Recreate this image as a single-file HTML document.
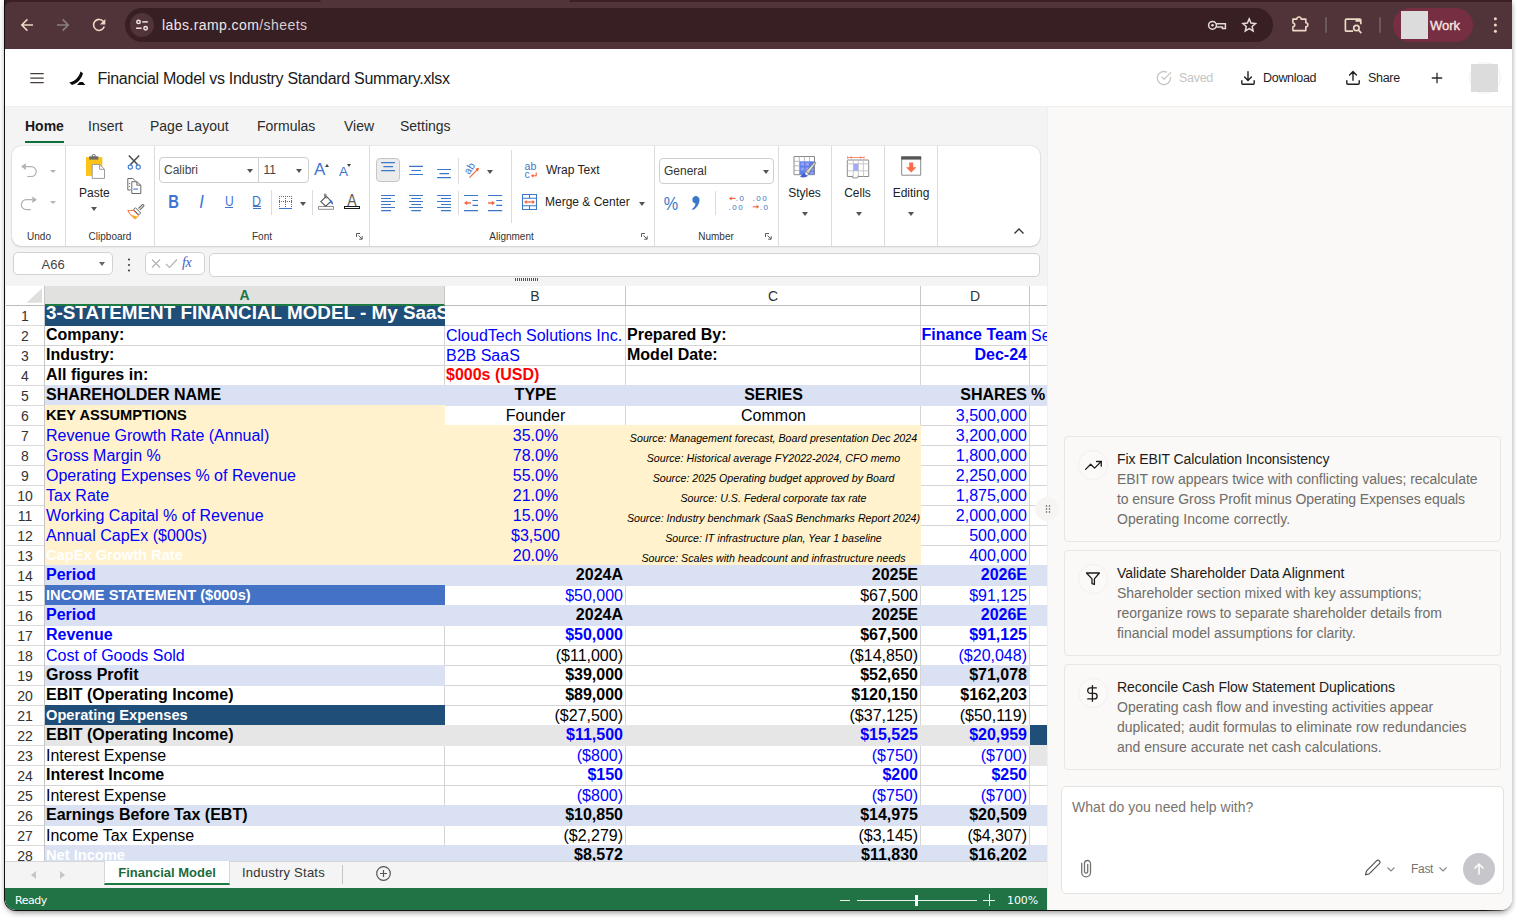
<!DOCTYPE html>
<html lang="en">
<head>
<meta charset="utf-8">
<title>Financial Model vs Industry Standard Summary.xlsx</title>
<style>
*{box-sizing:border-box;margin:0;padding:0}
html,body{width:1516px;height:919px;overflow:hidden;background:#fff}
body{font-family:"Liberation Sans",sans-serif;position:relative;color:#1f1f1f}
.abs{position:absolute}
#win{position:absolute;left:0;top:0;width:1516px;height:919px;overflow:hidden}
#shadow{position:absolute;left:6px;top:0;width:1505px;height:909px;border-radius:0 0 11px 11px;box-shadow:0 3px 6px rgba(0,0,0,.5)}
#winclip{position:absolute;left:4px;top:0;width:1508px;height:911px;border-radius:0 0 12px 12px;background:linear-gradient(90deg,#111 0,#111 1480px,#999 1508px)}
#inner{position:absolute;left:1px;top:0;width:1507px;height:910px;border-radius:0 0 11px 11px;overflow:hidden;background:#fff}
#page{position:absolute;left:-5px;top:0;width:1516px;height:919px}
/* chrome */
#tabstrip{position:absolute;left:5px;top:0;width:1507px;height:49px;background:#3a2026}
#toolbar{position:absolute;left:5px;top:2px;width:1507px;height:47px;background:#513439;border-radius:6px 0 0 0}
#acttab{position:absolute;left:320px;top:-4px;width:250px;height:7px;background:#513439;border-radius:0 0 4px 4px}
#omni{position:absolute;left:125px;top:8px;width:1148px;height:34px;border-radius:17px;background:#381f24}
#omni .ic{position:absolute;left:5px;top:5px;width:24px;height:24px;border-radius:12px;background:#513439}
#url{position:absolute;left:162px;top:16.5px;font-size:14px;line-height:17px;color:#efe6e6;letter-spacing:.42px;white-space:nowrap}
#url span{color:#d9cdcd}
/* app bar */
#appbar{position:absolute;left:5px;top:49px;width:1507px;height:57px;background:#fff}
#title{position:absolute;left:97.5px;top:69px;font-size:16px;line-height:20px;color:#1a1a1a;letter-spacing:-.3px;white-space:nowrap}
.abtn{position:absolute;top:70px;font-size:12.5px;line-height:16px;color:#1f1f1f;letter-spacing:-.3px;white-space:nowrap}
/* left pane */
#left{position:absolute;left:5px;top:106px;width:1042px;height:804px;background:#f4f4f4;border-top:1px solid #efefef}
#rtabs span{position:absolute;top:118px;font-size:14px;line-height:17px;color:#2b2b2b;white-space:nowrap}
#ribbon{position:absolute;left:12px;top:145.5px;width:1028px;height:100.5px;background:#fff;border-radius:9px;box-shadow:0 0 1.5px rgba(0,0,0,.22),0 1px 2px rgba(0,0,0,.12)}
.sep{position:absolute;top:146px;width:1px;height:100px;background:#dcdcdc}
.glabel{position:absolute;top:230px;font-size:11px;line-height:13px;color:#333;text-align:center;white-space:nowrap;transform:translateX(-50%)}
.rtxt{position:absolute;font-size:12px;line-height:14px;color:#222;white-space:nowrap}
.rbig{position:absolute;font-size:12px;line-height:14px;color:#222;white-space:nowrap;transform:translateX(-50%)}
.combo{position:absolute;background:#fff;border:1px solid #cfcfcf;border-radius:4px}
.tri{position:absolute;width:0;height:0;border-left:3.5px solid transparent;border-right:3.5px solid transparent;border-top:4px solid #555}
.fbox{position:absolute;top:252px;height:23px;background:#fff;border:1px solid #d2d2d2;border-radius:5px}
/* grid */
#grid{position:absolute;left:0;top:0;width:1047px;height:861px;overflow:hidden}
#gridbg{position:absolute;left:6px;top:286px;width:1041px;height:575px;background:#fff}
.cell{position:absolute;height:21px;overflow:hidden;box-shadow:inset -1px -1px 0 #d4d4d4;white-space:nowrap}
.cell.f{box-shadow:none;height:21px;z-index:1}
.cell span{position:absolute;line-height:20px;white-space:nowrap}
.tl{left:1px}.tr{right:3px}.tc{left:50%;transform:translateX(-50%)}
.rh{position:absolute;left:6px;width:39px;height:21px;border-bottom:1px solid #dadada;border-right:1px solid #c6c6c6;font-size:14px;line-height:23px;text-align:center;color:#333}
.ch{position:absolute;z-index:2;top:286px;height:20px;font-size:14px;line-height:20px;text-align:center;color:#333;background:#fff;border-right:1px solid #c8c8c8;border-bottom:1px solid #bdbdbd}
/* bottom */
#tabbar{position:absolute;left:5px;top:861px;width:1042px;height:27px;background:#f4f4f4;border-top:1px solid #d6d6d6}
#status{position:absolute;left:5px;top:888px;width:1042px;height:22px;background:#217346}
/* chat */
#chat{position:absolute;left:1047px;top:106px;width:465px;height:804px;background:#faf9f7;border-top:1px solid #f1f0ee;border-left:1px solid #f0efed}
.card{position:absolute;left:1064px;width:437px;height:106px;border:1px solid #e9e7e4;border-radius:4px;background:#faf9f7}
.card .ttl{position:absolute;left:52px;top:13px;font-size:14px;line-height:18px;color:#1c1b19;letter-spacing:-.07px;white-space:nowrap}
.card .dsc{position:absolute;left:52px;top:32px;font-size:14px;line-height:20px;color:#6f6d69;letter-spacing:-.03px;white-space:nowrap}
.card .ico{position:absolute;left:13px;top:13px;width:30px;height:30px;border-radius:15px;background:#fbfaf9;border:1px solid #f1f0ee}
#inbox{position:absolute;left:1061px;top:786px;width:443px;height:108px;border:1px solid #e4e2de;border-radius:5px;background:#fff}
</style>
</head>
<body>
<div id="win">
<div id="shadow"></div>
<div id="winclip"><div id="inner"><div id="page">
<div id="tabstrip"></div>
<div id="toolbar"></div>
<div id="acttab"></div>
<svg class="abs" style="left:5px;top:0" width="1507" height="49" viewBox="5 0 1507 49" fill="none" stroke="#ead9c3" stroke-width="1.600">
  <path d="M33 25H22.200M27.400 19.400L21.800 25l5.600 5.600"/>
  <path d="M57 25h10.800M62.600 19.400L68.200 25l-5.600 5.600" stroke="#8b7f7c"/>
  <path d="M103.600 21.800A5.500 5.500 0 1 0 104.300 26.600"/>
  <path d="M105.300 18.900v5.500h-5.500z" fill="#ead9c3" stroke="none"/>
</svg>
<div id="omni"><div class="ic"></div></div>
<svg class="abs" style="left:130px;top:13px" width="24" height="24" viewBox="0 0 24 24" fill="none" stroke="#f1e6e4" stroke-width="1.5">
  <circle cx="8.500" cy="8.900" r="1.700"/><path d="M12.300 8.900h5.500"/>
  <circle cx="15.600" cy="15.200" r="1.700"/><path d="M6.100 15.200h5.500"/>
</svg>
<div id="url">labs.ramp.com<span>/sheets</span></div>
<svg class="abs" style="left:1205px;top:13px" width="24" height="24" viewBox="0 0 24 24" fill="none" stroke="#e6dcd6" stroke-width="1.500">
  <circle cx="7.500" cy="12.300" r="3.900"/><circle cx="7.500" cy="12.300" r="1.300" fill="#e6dcd6" stroke="none"/><path d="M11.300 10.700H20.400V15.600H17.400V13.900H11.300"/>
</svg>
<svg class="abs" style="left:1237px;top:13px" width="24" height="24" viewBox="0 0 24 24" fill="none" stroke="#e6dcd6" stroke-width="1.500" stroke-linejoin="miter">
  <path d="M12.200 5.900l1.800 4.200 4.500 .400-3.400 3 1 4.400-3.900 -2.300-3.900 2.300 1 -4.400-3.400 -3 4.500 -.400z"/>
</svg>
<svg class="abs" style="left:1287px;top:13px" width="24" height="24" viewBox="0 0 24 24" fill="none" stroke="#ead9c3" stroke-width="1.600" stroke-linejoin="round">
  <path d="M5.900 6.100h4a2.100 2.100 0 0 1 4.200 0h4.700v3.700a2 2 0 0 1 0 4v3.800H5.900v-3.900a1.850 1.850 0 0 0 0 -3.700z"/>
</svg>
<div class="abs" style="left:1325.200px;top:17px;width:1.5px;height:16px;background:#6b5a58;border-radius:1px"></div>
<svg class="abs" style="left:1341px;top:13px" width="24" height="24" viewBox="0 0 24 24" fill="none" stroke="#ead9c3" stroke-width="1.7">
  <path d="M12 18.2H5.400a1 1 0 0 1 -1 -1V7.200a1 1 0 0 1 1 -1h13.400a1 1 0 0 1 1 1v4" stroke-linejoin="round"/>
  <path d="M14.5 6.400h5v2.400h-5z" fill="#ead9c3" stroke="none"/>
  <circle cx="15.400" cy="15" r="2.700"/><path d="M17.400 17.100l3 3"/>
</svg>
<div class="abs" style="left:1379.200px;top:17px;width:1.5px;height:16px;background:#6b5a58;border-radius:1px"></div>
<div class="abs" style="left:1393px;top:8px;width:80px;height:34px;border-radius:17px;background:#752e42"></div>
<div class="abs" style="left:1401px;top:11px;width:27px;height:28px;background:#dcdcdc"></div>
<div class="abs" style="left:1430px;top:18px;font-size:13px;line-height:16px;color:#fbe5e0;-webkit-text-stroke:.35px #fbe5e0">Work</div>
<svg class="abs" style="left:1489px;top:13px" width="12" height="24" viewBox="0 0 12 24" fill="#ead9c3"><circle cx="6.400" cy="5.800" r="1.500"/><circle cx="6.400" cy="12" r="1.500"/><circle cx="6.400" cy="18.200" r="1.500"/></svg>
<div id="appbar"></div>
<svg class="abs" style="left:28px;top:68px" width="20" height="20" viewBox="0 0 20 20" fill="none" stroke="#453c3b" stroke-width="1.400"><path d="M2.300 5.600h13.400M2.300 10.100h13.400M2.300 14.600h13.400"/></svg>
<svg class="abs" style="left:68px;top:70px" width="20" height="16" viewBox="0 0 20 16" fill="#0b0b0b">
  <path d="M12.500 1.400L15 3.300C13.700 9 9.200 13.600 4 15L1.200 12.400C6.600 11.300 10.900 7.500 12.500 1.400z"/>
  <path d="M9 15l2.700 -2.900h3.200L17.300 15z"/>
</svg>
<div id="title">Financial Model vs Industry Standard Summary.xlsx</div>
<!-- saved -->
<svg class="abs" style="left:1155px;top:69px" width="18" height="18" viewBox="0 0 18 18" fill="none" stroke="#c9c7c4" stroke-width="1.300" stroke-linecap="round" stroke-linejoin="round"><path d="M15.500 8.400v.7a6.600 6.600 0 1 1 -3.900 -6"/><path d="M15.700 3.600L9.100 10.200 7.100 8.200"/></svg>
<div class="abtn" style="left:1179px;color:#c6c4c1">Saved</div>
<svg class="abs" style="left:1239px;top:69px" width="18" height="18" viewBox="0 0 18 18" fill="none" stroke="#1f1f1f" stroke-width="1.400" stroke-linecap="round" stroke-linejoin="round"><path d="M9 2.800v8.400M5.600 8l3.400 3.400L12.400 8M2.800 11.600v2.600a1 1 0 0 0 1 1h10.400a1 1 0 0 0 1 -1v-2.600"/></svg>
<div class="abtn" style="left:1263px">Download</div>
<svg class="abs" style="left:1344px;top:69px" width="18" height="18" viewBox="0 0 18 18" fill="none" stroke="#1f1f1f" stroke-width="1.400" stroke-linecap="round" stroke-linejoin="round"><path d="M9 11.200V2.800M5.600 6l3.400 -3.400L12.400 6M2.800 11.600v2.600a1 1 0 0 0 1 1h10.400a1 1 0 0 0 1 -1v-2.600"/></svg>
<div class="abtn" style="left:1368px">Share</div>
<svg class="abs" style="left:1429px;top:70px" width="16" height="16" viewBox="0 0 16 16" fill="none" stroke="#2a2a2a" stroke-width="1.300"><path d="M8 2.800v10.400M2.800 8h10.400"/></svg>
<div class="abs" style="left:1469px;top:62px;width:32px;height:32px;border-radius:16px;border:1px solid #f1f0ee"></div>
<div class="abs" style="left:1471px;top:64px;width:27px;height:28px;background:#dcdcdc"></div>
<div id="left"></div>
<div id="chat"></div>
<div id="rtabs">
<span style="left:25px;font-weight:bold;color:#1b1b1b">Home</span>
<span style="left:88px">Insert</span>
<span style="left:150px">Page Layout</span>
<span style="left:257px">Formulas</span>
<span style="left:344px">View</span>
<span style="left:400px">Settings</span>
</div>
<div class="abs" style="left:25px;top:141px;width:39px;height:2px;background:#0f703b"></div>
<div id="ribbon"></div>
<div class="sep" style="left:65px"></div>
<div class="sep" style="left:154px"></div>
<div class="sep" style="left:369px"></div>
<div class="sep" style="left:654px"></div>
<div class="sep" style="left:778px"></div>
<div class="sep" style="left:831px"></div>
<div class="sep" style="left:884px"></div>
<div class="sep" style="left:937px"></div>
<div class="sep" style="left:511px;top:150px;height:73px"></div>
<div class="sep" style="left:458px;top:158px;height:26px"></div>
<div class="sep" style="left:458px;top:191px;height:24px"></div>
<div class="sep" style="left:271px;top:190px;height:25px"></div>
<div class="sep" style="left:312px;top:190px;height:25px"></div>
<div class="sep" style="left:715px;top:191px;height:24px"></div>
<div class="glabel" style="left:39px;font-size:10px">Undo</div>
<div class="glabel" style="left:110px;font-size:10px">Clipboard</div>
<div class="glabel" style="left:262px;font-size:10px">Font</div>
<div class="glabel" style="left:511.500px;font-size:10px">Alignment</div>
<div class="glabel" style="left:716px;font-size:10px">Number</div>
<!-- launchers -->
<svg class="abs" style="left:356.2px;top:233px" width="7" height="7" viewBox="0 0 7 7" fill="none" stroke="#5a5a5a" stroke-width="1"><path d="M.5 4V.5H4M2.500 2.500L6 6M6.200 3.200V6.200H3.200"/></svg>
<svg class="abs" style="left:641px;top:233px" width="7" height="7" viewBox="0 0 7 7" fill="none" stroke="#5a5a5a" stroke-width="1"><path d="M.5 4V.5H4M2.500 2.500L6 6M6.200 3.200V6.200H3.200"/></svg>
<svg class="abs" style="left:765px;top:233px" width="7" height="7" viewBox="0 0 7 7" fill="none" stroke="#5a5a5a" stroke-width="1"><path d="M.5 4V.5H4M2.500 2.500L6 6M6.200 3.200V6.200H3.200"/></svg>
<!-- undo group -->
<svg class="abs" style="left:18px;top:158px" width="22" height="22" viewBox="0 0 22 22" fill="none" stroke="#b1b1b1" stroke-width="1.200"><path d="M3.100 8.600L7.800 5.300V11.900z" fill="#b1b1b1" stroke="none"/><path d="M7.800 8.600H13.300A4.950 4.950 0 0 1 13.300 18.500H9.300"/></svg>
<svg class="abs" style="left:18px;top:189px" width="22" height="22" viewBox="0 0 22 22" fill="none" stroke="#b1b1b1" stroke-width="1.200"><path d="M18.900 10.700L14.300 7.400V14z" fill="#b1b1b1" stroke="none"/><path d="M14.300 10.700H8.300A4.950 4.950 0 0 0 8.300 20.600H12.800"/></svg>
<div class="tri" style="left:49.500px;top:169.500px;border-top-color:#b3b3b3;border-left-width:3.200px;border-right-width:3.200px;border-top-width:3.700px"></div>
<div class="tri" style="left:49.500px;top:200.500px;border-top-color:#b3b3b3;border-left-width:3.200px;border-right-width:3.200px;border-top-width:3.700px"></div>
<!-- clipboard group -->
<svg class="abs" style="left:84px;top:153px" width="24" height="28" viewBox="0 0 24 28" fill="none">
  <path d="M2 4.100h16.300v18.800H2z" fill="#fcc419"/>
  <circle cx="9.750" cy="2.900" r="1.500" stroke="#6b6b6b" stroke-width="1"/>
  <path d="M5.200 3.300h9.100v3.300H5.200z" fill="#6b6b6b"/>
  <path d="M8.200 11.500H15.600L20.500 16.300V25.400H8.200z" fill="#fff" stroke="#9c9c9c" stroke-width="1"/><path d="M15.600 11.500V16.300H20.500" stroke="#9c9c9c" stroke-width="1"/>
</svg>
<div class="rbig" style="left:94.300px;top:186px">Paste</div>
<div class="tri" style="left:91.200px;top:207.400px"></div>
<svg class="abs" style="left:125px;top:153px" width="18" height="18" viewBox="0 0 18 18" fill="none"><path d="M3.800 2.400L12.700 11.800M14.200 2.400L5.300 11.800" stroke="#4a4a4a" stroke-width="1.500"/><circle cx="5.300" cy="14" r="2.100" stroke="#3f7ad6" stroke-width="1.100"/><circle cx="13.200" cy="14" r="2.100" stroke="#3f7ad6" stroke-width="1.100"/></svg>
<svg class="abs" style="left:125px;top:177px" width="18" height="18" viewBox="0 0 18 18" fill="none" stroke="#6a6a6a" stroke-width="1"><path d="M5.800 13H2.800V1.500H7.800L10.700 4.200"/><path d="M6.800 4.700H11.800L15.800 8.200V16.500H6.800z" fill="#fff"/><path d="M11.800 4.700V8.200H15.800"/><path d="M8.300 12.100H13.200" stroke="#3f7ad6" stroke-width="1.100"/><path d="M4.500 6v1M4.500 9v1" stroke="#3f7ad6" stroke-width="1.100"/></svg>
<svg class="abs" style="left:126px;top:202px" width="20" height="20" viewBox="0 0 20 20" fill="none"><path d="M12.500 6.500L16.300 2.700a1 1 0 0 1 1.400 1.400L13.900 7.900" stroke="#666" stroke-width="1.100" fill="#fff"/><path d="M9.400 5.700L14.700 11 12.900 12.800 7.600 7.500z" fill="#fff" stroke="#666" stroke-width="1"/><path d="M7 8.100L12.300 13.400C11.800 15 10 16.500 9 16.900 6 14.500 3 11.500 1.800 8.400 4 8.600 5.800 8.700 7 8.100z" fill="#fff" stroke="#fa6a3c" stroke-width="1"/><path d="M4.500 12.400L11 14.600C10.500 15.600 9.700 16.500 9 16.900 7.300 15.600 5.700 14 4.500 12.400z" fill="#fcb31a"/></svg>
<!-- font group -->
<div class="combo" style="left:159px;top:157px;width:150px;height:26px"></div>
<div class="abs" style="left:258px;top:158px;width:1px;height:24px;background:#cfcfcf"></div>
<div class="rtxt" style="left:164px;top:163px;color:#444">Calibri</div>
<div class="rtxt" style="left:263.500px;top:163px;color:#444">11</div>
<div class="tri" style="left:247px;top:168.700px"></div>
<div class="tri" style="left:296px;top:168.700px"></div>
<div class="abs" style="left:314px;top:160px;font-size:17px;line-height:20px;color:#3f74d1">A</div>
<div class="abs" style="left:324.500px;top:163.500px;width:0;height:0;border-left:2.500px solid transparent;border-right:2.500px solid transparent;border-bottom:3px solid #444"></div>
<div class="abs" style="left:339px;top:161.500px;font-size:13.500px;line-height:20px;color:#3f74d1">A</div>
<div class="abs" style="left:347px;top:163.500px;width:0;height:0;border-left:2.500px solid transparent;border-right:2.500px solid transparent;border-top:3px solid #444"></div>
<div class="abs" style="left:167px;top:191.500px;width:13px;text-align:center;font-size:18px;line-height:20px;color:#3f74d1;font-weight:bold;transform:scaleX(.82)">B</div>
<div class="abs" style="left:196px;top:191.500px;width:11px;text-align:center;font-size:17.500px;line-height:20px;color:#3f74d1;font-style:italic;transform:scaleX(.95)">I</div>
<div class="abs" style="left:222.500px;top:191px;width:13px;text-align:center;font-size:15.500px;line-height:20px;color:#3f74d1;transform:scaleX(.78)">U</div>
<div class="abs" style="left:225px;top:207.300px;width:8px;height:1px;background:#3f74d1"></div>
<div class="abs" style="left:250px;top:191px;width:13px;text-align:center;font-size:15.500px;line-height:20px;color:#3f74d1;transform:scaleX(.8)">D</div>
<div class="abs" style="left:252.500px;top:205.800px;width:8.500px;height:1px;background:#3f74d1"></div>
<div class="abs" style="left:252.500px;top:207.800px;width:8.500px;height:1px;background:#3f74d1"></div>
<svg class="abs" style="left:278px;top:195px" width="16" height="16" viewBox="0 0 16 16" fill="none" stroke="#6d6d6d" stroke-width="1" stroke-dasharray="1 1" shape-rendering="crispEdges"><path d="M1 1.500h13M1.500 1v12M13.500 1v12M7.500 1v12M1 6.500h13"/><path d="M1 13.300h13.200" stroke="#3f74d1" stroke-dasharray="none" stroke-width="1.200"/></svg>
<div class="tri" style="left:300px;top:202px"></div>
<svg class="abs" style="left:316px;top:192px" width="20" height="20" viewBox="0 0 20 20" fill="none"><path d="M2.500 14.500h15v2.800h-15z" fill="#fff" stroke="#8f8f8f" stroke-width="1"/><path d="M4.800 9.600L10.300 4.300 15.200 9.200 9.700 14.200z" fill="#fff" stroke="#555" stroke-width="1.100"/><path d="M9.200 2.600c-.8 1 -.6 2.300 1.100 3.900" stroke="#555" stroke-width="1"/><circle cx="9.200" cy="2.800" r=".9" stroke="#555" stroke-width=".8" fill="#fff"/><path d="M13.200 7.600c2.700 .6 4.300 2.500 3.700 5.200-1.400 -.6 -2.900 -2.300 -3.700 -5.200z" fill="#3f74d1"/></svg>
<div class="abs" style="left:345px;top:190.500px;width:14px;text-align:center;font-size:16px;line-height:20px;color:#5a5a5a;transform:scaleX(.88)">A</div>
<div class="abs" style="left:343.500px;top:206.300px;width:16.500px;height:3.200px;border:1px solid #1a1a1a;background:#fff;border-bottom-width:1.500px"></div>
<!-- alignment group -->
<div class="abs" style="left:376px;top:158px;width:24px;height:24px;border:1px solid #c6c6c6;border-radius:4px;background:#ececec"></div>
<svg class="abs" style="left:380px;top:158px" width="16" height="22" viewBox="0 0 16 22" stroke="#3b78c8" stroke-width="1.150" fill="none"><path d="M1.1 4.6H15.0M3.4 8.6H13.0M1.1 12.6H15.0"/></svg>
<svg class="abs" style="left:408px;top:158px" width="16" height="22" viewBox="0 0 16 22" stroke="#3b78c8" stroke-width="1.150" fill="none"><path d="M1.1 8.4H15.0M3.4 12.5H13.0M1.1 16.5H15.0"/></svg>
<svg class="abs" style="left:436px;top:158px" width="16" height="22" viewBox="0 0 16 22" stroke="#3b78c8" stroke-width="1.150" fill="none"><path d="M1.1 11.5H15.0M3.4 15.6H13.0M1.1 19.6H15.0"/></svg>
<svg class="abs" style="left:462px;top:160px" width="20" height="20" viewBox="0 0 20 20" fill="none"><text x="0" y="0" font-size="10.500" fill="#3b78c8" transform="translate(7.300 15.200) rotate(-58)" font-family="Liberation Sans, sans-serif">ab</text><path d="M7.500 17.700L16.300 8.600" stroke="#f4623a" stroke-width="1.200"/><path d="M17 7.800l-3.600 1 2.600 2.600z" fill="#f4623a"/></svg>
<div class="tri" style="left:487px;top:169.500px"></div>
<svg class="abs" style="left:380px;top:193px" width="16" height="22" viewBox="0 0 16 22" stroke="#3b78c8" stroke-width="1.150" fill="none"><path d="M1.1 2.5H15.0M1.1 5.5H11.0M1.1 8.5H15.0M1.1 11.5H11.0M1.1 14.5H15.0M1.1 17.6H11.0"/></svg>
<svg class="abs" style="left:408px;top:193px" width="16" height="22" viewBox="0 0 16 22" stroke="#3b78c8" stroke-width="1.150" fill="none"><path d="M1.1 2.5H15.0M3.3 5.5H13.0M1.1 8.5H15.0M3.3 11.5H13.0M1.1 14.5H15.0M3.3 17.6H13.0"/></svg>
<svg class="abs" style="left:436px;top:193px" width="16" height="22" viewBox="0 0 16 22" stroke="#3b78c8" stroke-width="1.150" fill="none"><path d="M1.1 2.5H15.0M5.0 5.5H15.0M1.1 8.5H15.0M5.0 11.5H15.0M1.1 14.5H15.0M5.0 17.6H15.0"/></svg>
<svg class="abs" style="left:463px;top:193px" width="16" height="22" viewBox="0 0 16 22" fill="none" stroke="#3b78c8" stroke-width="1.150"><path d="M1 2.500H15M9.500 7.500H15M9.500 12.400H15M1 17.600H15"/><path d="M3.500 10H8" stroke="#f4623a" stroke-width="1.400"/><path d="M1 10l3.200 -2.300v4.600z" fill="#f4623a" stroke="none"/></svg>
<svg class="abs" style="left:487px;top:193px" width="16" height="22" viewBox="0 0 16 22" fill="none" stroke="#3b78c8" stroke-width="1.150"><path d="M1 2.500H15.200M9.200 7.500H15.200M9.200 12.400H15.200M1 17.600H15.200"/><path d="M1 10H5.500" stroke="#f4623a" stroke-width="1.400"/><path d="M8 10l-3.200 -2.300v4.600z" fill="#f4623a" stroke="none"/></svg>
<svg class="abs" style="left:523px;top:160px" width="18" height="20" viewBox="0 0 18 20" fill="none"><text x="1.600" y="9.800" font-size="10.500" fill="#3b78c8" font-family="Liberation Sans, sans-serif">ab</text><text x="1.600" y="17.700" font-size="10.500" fill="#3b78c8" font-family="Liberation Sans, sans-serif">c</text><path d="M13.200 12.500v3.300H9.300" stroke="#f4623a" stroke-width="1.100"/><path d="M7.800 15.800l2.600 -1.900v3.800z" fill="#f4623a"/></svg>
<div class="rtxt" style="left:546px;top:163px">Wrap Text</div>
<svg class="abs" style="left:521px;top:193px" width="18" height="18" viewBox="0 0 18 18" fill="none" stroke="#3b78c8" stroke-width="1.100"><path d="M1.500 1.500h14v15h-14zM1.500 5.200h14M1.500 12.800h14M8.500 1.500v3.700M8.500 12.800v3.700"/><path d="M4.500 9h8" stroke="#f4623a" stroke-width="1.300"/><path d="M3 9l2.600 -1.900v3.800zM14 9l-2.600 -1.900v3.800z" fill="#f4623a" stroke="none"/></svg>
<div class="rtxt" style="left:545px;top:195px">Merge &amp; Center</div>
<div class="tri" style="left:638.500px;top:201.500px"></div>
<!-- number group -->
<div class="combo" style="left:659px;top:158px;width:115px;height:26px"></div>
<div class="rtxt" style="left:664px;top:164px;color:#333">General</div>
<div class="tri" style="left:762.800px;top:169.500px"></div>
<div class="abs" style="left:663px;top:193.500px;width:16px;text-align:center;font-size:18px;line-height:20px;color:#3b78c8;transform:scaleX(.9)">%</div>
<svg class="abs" style="left:688px;top:193px" width="16" height="20" viewBox="0 0 16 20" fill="#3b78c8"><path d="M7.600 3a3.800 3.800 0 0 1 3.900 4c0 4 -2.600 7.900 -6.700 10.100l-.8 -1c2.100 -1.600 3.300 -3.300 3.500 -5.600a3.800 3.800 0 0 1 .1 -7.500z"/></svg>
<svg class="abs" style="left:727px;top:193px" width="20" height="20" viewBox="0 0 20 20" fill="none"><path d="M3.200 5.400H8.600" stroke="#f4623a" stroke-width="1.100"/><path d="M2 5.400l2.600 -2v4z" fill="#f4623a"/><text x="8.800" y="8.200" font-size="8" letter-spacing="1.500" fill="#3b78c8" font-family="Liberation Sans, sans-serif">.0</text><text x="1.500" y="16.800" font-size="8" letter-spacing="1.500" fill="#3b78c8" font-family="Liberation Sans, sans-serif">.00</text></svg>
<svg class="abs" style="left:751px;top:193px" width="20" height="20" viewBox="0 0 20 20" fill="none"><text x="1.500" y="8.200" font-size="8" letter-spacing="1.500" fill="#3b78c8" font-family="Liberation Sans, sans-serif">.00</text><path d="M1.700 13.800H6.600" stroke="#f4623a" stroke-width="1.100"/><path d="M8.200 13.800l-2.600 -2v4z" fill="#f4623a"/><text x="8.800" y="16.800" font-size="8" letter-spacing="1.500" fill="#3b78c8" font-family="Liberation Sans, sans-serif">.0</text></svg>
<!-- styles / cells / editing -->
<svg class="abs" style="left:792px;top:154px" width="26" height="26" viewBox="0 0 26 26" fill="none"><path d="M2 2.500h20.500v18.200H2z" fill="#fff" stroke="#8a8a8a"/><path d="M7.300 7.300h15v13.200h-15z" fill="#5b7fe8"/><path d="M8.800 8.600h3.400v3.200H8.800zM13.600 8.600h3.400v3.200h-3.400zM8.800 13.400h3.400v3.200H8.800zM13.600 13.400h3.400v3.200h-3.400zM18.400 13.400h3v3.200h-3zM18.400 17.800h3v2.200h-3z" fill="#9b9ef6"/><path d="M2 7.300h5.300M2 11.800h5.300M2 16.400h5.300M7.300 2.500v4.800M12.400 2.500v4.800M17.500 2.500v4.800" stroke="#a8a8a8" stroke-width=".8"/><path d="M22.200 8.300c1 -.7 2 .3 1.400 1.200L16.500 19.500 13.400 18z" fill="#d9d9d9" stroke="#777" stroke-width=".9"/><path d="M13.200 17.800l3.200 1.800c-.6 1.500 -1.800 2.300 -3.400 2.200z" fill="#fff" stroke="#888" stroke-width=".6"/><path d="M8 22.700c1.500 -.8 2.300 -2.500 3.800 -3.600 1.300 1.400 2.600 2.400 4.200 3 -2.500 1.500 -5.400 1.700 -8 .6z" fill="#3f5fd0"/></svg>
<div class="rbig" style="left:804.500px;top:186px">Styles</div>
<div class="tri" style="left:802px;top:211.500px"></div>
<svg class="abs" style="left:846px;top:154px" width="24" height="26" viewBox="0 0 24 26" fill="none"><path d="M1.800 6h20.400a.5 .5 0 0 1 .5 .5v16H1.300V6.500a.5 .5 0 0 1 .5 -.5z" fill="#fff" stroke="#8a8a8a"/><path d="M1.300 9.800h21.400M1.300 16.800h21.400M7.400 6v16.500M12.300 6v16.500M17.400 6v16.500" stroke="#c4c4c4" stroke-width=".9"/><path d="M7.400 9.800h4.900v7H7.400z" fill="#a9a8f5"/><path d="M2.200 3.500h15.400M1.700 2v3M18 2v3" stroke="#f4623a" stroke-width=".7"/><path d="M4 3.500l1.800 -1.200v2.400zM16 3.500l-1.800 -1.200v2.400z" fill="#f4623a"/><path d="M6.800 21.500v2.400h4.800l.6 -2.400" stroke="#8a8a8a" fill="#fff" stroke-width=".9"/></svg>
<div class="rbig" style="left:857.500px;top:186px">Cells</div>
<div class="tri" style="left:855.500px;top:211.500px"></div>
<svg class="abs" style="left:900px;top:155px" width="22" height="22" viewBox="0 0 22 22" fill="none"><path d="M1.700 1.900h19v18.300h-19z" fill="#fff" stroke="#8a8a8a"/><path d="M1.200 1.400h20v3.200h-20z" fill="#555"/><path d="M9.200 7.400h4v4.800h3.200l-5.200 5.200-5.200 -5.200h3.200z" fill="#fa6b49"/></svg>
<div class="rbig" style="left:911px;top:186px">Editing</div>
<div class="tri" style="left:908.300px;top:211.500px"></div>
<svg class="abs" style="left:1012px;top:226px" width="14" height="10" viewBox="0 0 14 10" fill="none" stroke="#333" stroke-width="1.300"><path d="M2.500 7.500L7 3l4.500 4.500"/></svg>
<div class="fbox" style="left:13px;width:100px"></div>
<div class="abs" style="left:41.500px;top:257px;font-size:13px;line-height:15px;color:#444">A66</div>
<div class="tri" style="left:98.900px;top:262.200px;border-top-width:4.600px;border-top-color:#666"></div>
<svg class="abs" style="left:126px;top:257px" width="6" height="16" viewBox="0 0 6 16" fill="#444"><circle cx="3" cy="2.500" r="1.100"/><circle cx="3" cy="8" r="1.100"/><circle cx="3" cy="13.500" r="1.100"/></svg>
<div class="fbox" style="left:145px;width:60px"></div>
<svg class="abs" style="left:150px;top:258px" width="30" height="12" viewBox="0 0 30 12" fill="none" stroke="#b4b4b4" stroke-width="1.200"><path d="M2 1.500l8 8M10 1.500l-8 8M16 6l3.500 3.500 7.500 -8"/></svg>
<div class="abs" style="left:182px;top:254px;font-size:14px;line-height:18px;color:#3f62c8;font-style:italic;font-family:'Liberation Serif',serif;letter-spacing:-.5px">fx</div>
<div class="fbox" style="left:209px;width:830.500px;top:253px;height:24px"></div>
<div class="abs" style="left:515px;top:278px;width:24px;height:3px;background:repeating-linear-gradient(90deg,#555 0,#555 1px,transparent 1px,transparent 2px)"></div>
<div id="grid">
<div id="gridbg"></div>
<div class="ch" style="left:6px;width:39px;border-right-color:#c6c6c6"></div>
<svg class="abs" style="left:26px;top:288px;z-index:3" width="16" height="15" viewBox="0 0 16 15"><path d="M16 .3v14.400H.7z" fill="#dfdfdd"/></svg>
<div class="ch" style="left:45px;width:400px;background:#e1e1df;color:#217346;font-weight:bold;border-bottom:2px solid #1e7a43;line-height:19px">A</div>
<div class="ch" style="left:445px;width:181px">B</div>
<div class="ch" style="left:626px;width:295px">C</div>
<div class="ch" style="left:921px;width:109px">D</div>
<div class="ch" style="left:1030px;width:19px"></div>
<div class="rh" style="top:305.0px">1</div>
<div class="cell f" style="left:45px;top:305.0px;width:400px;background:#1f4e78;"><span class="tl" style="color:#fff;font-size:18.87px;font-weight:bold;top:-2px;">3-STATEMENT FINANCIAL MODEL - My SaaS</span></div>
<div class="cell" style="left:445px;top:305.0px;width:181px;"></div>
<div class="cell" style="left:626px;top:305.0px;width:295px;"></div>
<div class="cell" style="left:921px;top:305.0px;width:109px;"></div>
<div class="cell" style="left:1030px;top:305.0px;width:19px;"></div>
<div class="rh" style="top:325.0px">2</div>
<div class="cell" style="left:45px;top:325.0px;width:400px;"><span class="tl" style="color:#000;font-size:16px;font-weight:bold;top:0px;">Company:</span></div>
<div class="cell" style="left:445px;top:325.0px;width:181px;"><span class="tl" style="color:#0000ff;font-size:16px;top:1px;">CloudTech Solutions Inc.</span></div>
<div class="cell" style="left:626px;top:325.0px;width:295px;"><span class="tl" style="color:#000;font-size:16px;font-weight:bold;top:0px;">Prepared By:</span></div>
<div class="cell" style="left:921px;top:325.0px;width:109px;"><span class="tr" style="color:#0000ff;font-size:16px;font-weight:bold;top:0px;">Finance Team</span></div>
<div class="cell" style="left:1030px;top:325.0px;width:19px;"><span class="tl" style="color:#0000ff;font-size:16px;top:1px;">Series</span></div>
<div class="rh" style="top:345.0px">3</div>
<div class="cell" style="left:45px;top:345.0px;width:400px;"><span class="tl" style="color:#000;font-size:16px;font-weight:bold;top:0px;">Industry:</span></div>
<div class="cell" style="left:445px;top:345.0px;width:181px;"><span class="tl" style="color:#0000ff;font-size:16px;top:1px;">B2B SaaS</span></div>
<div class="cell" style="left:626px;top:345.0px;width:295px;"><span class="tl" style="color:#000;font-size:16px;font-weight:bold;top:0px;">Model Date:</span></div>
<div class="cell" style="left:921px;top:345.0px;width:109px;"><span class="tr" style="color:#0000ff;font-size:16px;font-weight:bold;top:0px;">Dec-24</span></div>
<div class="cell" style="left:1030px;top:345.0px;width:19px;"></div>
<div class="rh" style="top:365.0px">4</div>
<div class="cell" style="left:45px;top:365.0px;width:400px;"><span class="tl" style="color:#000;font-size:16px;font-weight:bold;top:0px;">All figures in:</span></div>
<div class="cell" style="left:445px;top:365.0px;width:181px;"><span class="tl" style="color:#ff0000;font-size:16px;font-weight:bold;top:0px;">$000s (USD)</span></div>
<div class="cell" style="left:626px;top:365.0px;width:295px;"></div>
<div class="cell" style="left:921px;top:365.0px;width:109px;"></div>
<div class="cell" style="left:1030px;top:365.0px;width:19px;"></div>
<div class="rh" style="top:385.0px">5</div>
<div class="cell f" style="left:45px;top:385.0px;width:400px;background:#d9e1f2;"><span class="tl" style="color:#000;font-size:16px;font-weight:bold;top:0px;">SHAREHOLDER NAME</span></div>
<div class="cell f" style="left:445px;top:385.0px;width:181px;background:#d9e1f2;"><span class="tc" style="color:#000;font-size:16px;font-weight:bold;top:0px;">TYPE</span></div>
<div class="cell f" style="left:626px;top:385.0px;width:295px;background:#d9e1f2;"><span class="tc" style="color:#000;font-size:16px;font-weight:bold;top:0px;">SERIES</span></div>
<div class="cell f" style="left:921px;top:385.0px;width:109px;background:#d9e1f2;"><span class="tr" style="color:#000;font-size:16px;font-weight:bold;top:0px;">SHARES</span></div>
<div class="cell f" style="left:1030px;top:385.0px;width:19px;background:#d9e1f2;"><span class="tl" style="color:#000;font-size:16px;font-weight:bold;top:0px;">% OWN</span></div>
<div class="rh" style="top:405.0px">6</div>
<div class="cell f" style="left:45px;top:405.0px;width:400px;background:#fff2cc;"><span class="tl" style="color:#000;font-size:14.67px;font-weight:bold;top:0px;">KEY ASSUMPTIONS</span></div>
<div class="cell" style="left:445px;top:405.0px;width:181px;"><span class="tc" style="color:#000;font-size:16px;top:1px;">Founder</span></div>
<div class="cell" style="left:626px;top:405.0px;width:295px;"><span class="tc" style="color:#000;font-size:16px;top:1px;">Common</span></div>
<div class="cell" style="left:921px;top:405.0px;width:109px;"><span class="tr" style="color:#0000ff;font-size:16px;top:1px;">3,500,000</span></div>
<div class="cell" style="left:1030px;top:405.0px;width:19px;"></div>
<div class="rh" style="top:425.0px">7</div>
<div class="cell f" style="left:45px;top:425.0px;width:400px;background:#fff2cc;"><span class="tl" style="color:#0000ff;font-size:16px;top:1px;">Revenue Growth Rate (Annual)</span></div>
<div class="cell f" style="left:445px;top:425.0px;width:181px;background:#fff2cc;"><span class="tc" style="color:#0000ff;font-size:16px;top:1px;">35.0%</span></div>
<div class="cell f" style="left:626px;top:425.0px;width:295px;background:#fff2cc;"><span class="tc" style="color:#000;font-size:10.67px;font-style:italic;top:3px;">Source: Management forecast, Board presentation Dec 2024</span></div>
<div class="cell" style="left:921px;top:425.0px;width:109px;"><span class="tr" style="color:#0000ff;font-size:16px;top:1px;">3,200,000</span></div>
<div class="cell" style="left:1030px;top:425.0px;width:19px;"></div>
<div class="rh" style="top:445.0px">8</div>
<div class="cell f" style="left:45px;top:445.0px;width:400px;background:#fff2cc;"><span class="tl" style="color:#0000ff;font-size:16px;top:1px;">Gross Margin %</span></div>
<div class="cell f" style="left:445px;top:445.0px;width:181px;background:#fff2cc;"><span class="tc" style="color:#0000ff;font-size:16px;top:1px;">78.0%</span></div>
<div class="cell f" style="left:626px;top:445.0px;width:295px;background:#fff2cc;"><span class="tc" style="color:#000;font-size:10.67px;font-style:italic;top:3px;">Source: Historical average FY2022-2024, CFO memo</span></div>
<div class="cell" style="left:921px;top:445.0px;width:109px;"><span class="tr" style="color:#0000ff;font-size:16px;top:1px;">1,800,000</span></div>
<div class="cell" style="left:1030px;top:445.0px;width:19px;"></div>
<div class="rh" style="top:465.0px">9</div>
<div class="cell f" style="left:45px;top:465.0px;width:400px;background:#fff2cc;"><span class="tl" style="color:#0000ff;font-size:16px;top:1px;">Operating Expenses % of Revenue</span></div>
<div class="cell f" style="left:445px;top:465.0px;width:181px;background:#fff2cc;"><span class="tc" style="color:#0000ff;font-size:16px;top:1px;">55.0%</span></div>
<div class="cell f" style="left:626px;top:465.0px;width:295px;background:#fff2cc;"><span class="tc" style="color:#000;font-size:10.67px;font-style:italic;top:3px;">Source: 2025 Operating budget approved by Board</span></div>
<div class="cell" style="left:921px;top:465.0px;width:109px;"><span class="tr" style="color:#0000ff;font-size:16px;top:1px;">2,250,000</span></div>
<div class="cell" style="left:1030px;top:465.0px;width:19px;"></div>
<div class="rh" style="top:485.0px">10</div>
<div class="cell f" style="left:45px;top:485.0px;width:400px;background:#fff2cc;"><span class="tl" style="color:#0000ff;font-size:16px;top:1px;">Tax Rate</span></div>
<div class="cell f" style="left:445px;top:485.0px;width:181px;background:#fff2cc;"><span class="tc" style="color:#0000ff;font-size:16px;top:1px;">21.0%</span></div>
<div class="cell f" style="left:626px;top:485.0px;width:295px;background:#fff2cc;"><span class="tc" style="color:#000;font-size:10.67px;font-style:italic;top:3px;">Source: U.S. Federal corporate tax rate</span></div>
<div class="cell" style="left:921px;top:485.0px;width:109px;"><span class="tr" style="color:#0000ff;font-size:16px;top:1px;">1,875,000</span></div>
<div class="cell" style="left:1030px;top:485.0px;width:19px;"></div>
<div class="rh" style="top:505.0px">11</div>
<div class="cell f" style="left:45px;top:505.0px;width:400px;background:#fff2cc;"><span class="tl" style="color:#0000ff;font-size:16px;top:1px;">Working Capital % of Revenue</span></div>
<div class="cell f" style="left:445px;top:505.0px;width:181px;background:#fff2cc;"><span class="tc" style="color:#0000ff;font-size:16px;top:1px;">15.0%</span></div>
<div class="cell f" style="left:626px;top:505.0px;width:295px;background:#fff2cc;"><span class="tc" style="color:#000;font-size:10.67px;font-style:italic;top:3px;">Source: Industry benchmark (SaaS Benchmarks Report 2024)</span></div>
<div class="cell" style="left:921px;top:505.0px;width:109px;"><span class="tr" style="color:#0000ff;font-size:16px;top:1px;">2,000,000</span></div>
<div class="cell" style="left:1030px;top:505.0px;width:19px;"></div>
<div class="rh" style="top:525.0px">12</div>
<div class="cell f" style="left:45px;top:525.0px;width:400px;background:#fff2cc;"><span class="tl" style="color:#0000ff;font-size:16px;top:1px;">Annual CapEx ($000s)</span></div>
<div class="cell f" style="left:445px;top:525.0px;width:181px;background:#fff2cc;"><span class="tc" style="color:#0000ff;font-size:16px;top:1px;">$3,500</span></div>
<div class="cell f" style="left:626px;top:525.0px;width:295px;background:#fff2cc;"><span class="tc" style="color:#000;font-size:10.67px;font-style:italic;top:3px;">Source: IT infrastructure plan, Year 1 baseline</span></div>
<div class="cell" style="left:921px;top:525.0px;width:109px;"><span class="tr" style="color:#0000ff;font-size:16px;top:1px;">500,000</span></div>
<div class="cell" style="left:1030px;top:525.0px;width:19px;"></div>
<div class="rh" style="top:545.0px">13</div>
<div class="cell f" style="left:45px;top:545.0px;width:400px;background:#fff2cc;"><span class="tl" style="color:#fff;font-size:14.67px;font-weight:bold;top:0px;">CapEx Growth Rate</span></div>
<div class="cell f" style="left:445px;top:545.0px;width:181px;background:#fff2cc;"><span class="tc" style="color:#0000ff;font-size:16px;top:1px;">20.0%</span></div>
<div class="cell f" style="left:626px;top:545.0px;width:295px;background:#fff2cc;"><span class="tc" style="color:#000;font-size:10.67px;font-style:italic;top:3px;">Source: Scales with headcount and infrastructure needs</span></div>
<div class="cell" style="left:921px;top:545.0px;width:109px;"><span class="tr" style="color:#0000ff;font-size:16px;top:1px;">400,000</span></div>
<div class="cell" style="left:1030px;top:545.0px;width:19px;"></div>
<div class="rh" style="top:565.0px">14</div>
<div class="cell f" style="left:45px;top:565.0px;width:400px;background:#d9e1f2;"><span class="tl" style="color:#0000ff;font-size:16px;font-weight:bold;top:0px;">Period</span></div>
<div class="cell f" style="left:445px;top:565.0px;width:181px;background:#d9e1f2;"><span class="tr" style="color:#000;font-size:16px;font-weight:bold;top:0px;">2024A</span></div>
<div class="cell f" style="left:626px;top:565.0px;width:295px;background:#d9e1f2;"><span class="tr" style="color:#000;font-size:16px;font-weight:bold;top:0px;">2025E</span></div>
<div class="cell f" style="left:921px;top:565.0px;width:109px;background:#d9e1f2;"><span class="tr" style="color:#0000ff;font-size:16px;font-weight:bold;top:0px;">2026E</span></div>
<div class="cell f" style="left:1030px;top:565.0px;width:19px;background:#d9e1f2;"></div>
<div class="rh" style="top:585.0px">15</div>
<div class="cell f" style="left:45px;top:585.0px;width:400px;background:#4472c4;"><span class="tl" style="color:#fff;font-size:14.67px;font-weight:bold;top:0px;">INCOME STATEMENT ($000s)</span></div>
<div class="cell" style="left:445px;top:585.0px;width:181px;"><span class="tr" style="color:#0000ff;font-size:16px;top:1px;">$50,000</span></div>
<div class="cell" style="left:626px;top:585.0px;width:295px;"><span class="tr" style="color:#000;font-size:16px;top:1px;">$67,500</span></div>
<div class="cell" style="left:921px;top:585.0px;width:109px;"><span class="tr" style="color:#0000ff;font-size:16px;top:1px;">$91,125</span></div>
<div class="cell" style="left:1030px;top:585.0px;width:19px;"></div>
<div class="rh" style="top:605.0px">16</div>
<div class="cell f" style="left:45px;top:605.0px;width:400px;background:#d9e1f2;"><span class="tl" style="color:#0000ff;font-size:16px;font-weight:bold;top:0px;">Period</span></div>
<div class="cell f" style="left:445px;top:605.0px;width:181px;background:#d9e1f2;"><span class="tr" style="color:#000;font-size:16px;font-weight:bold;top:0px;">2024A</span></div>
<div class="cell f" style="left:626px;top:605.0px;width:295px;background:#d9e1f2;"><span class="tr" style="color:#000;font-size:16px;font-weight:bold;top:0px;">2025E</span></div>
<div class="cell f" style="left:921px;top:605.0px;width:109px;background:#d9e1f2;"><span class="tr" style="color:#0000ff;font-size:16px;font-weight:bold;top:0px;">2026E</span></div>
<div class="cell f" style="left:1030px;top:605.0px;width:19px;background:#d9e1f2;"></div>
<div class="rh" style="top:625.0px">17</div>
<div class="cell" style="left:45px;top:625.0px;width:400px;"><span class="tl" style="color:#0000ff;font-size:16px;font-weight:bold;top:0px;">Revenue</span></div>
<div class="cell" style="left:445px;top:625.0px;width:181px;"><span class="tr" style="color:#0000ff;font-size:16px;font-weight:bold;top:0px;">$50,000</span></div>
<div class="cell" style="left:626px;top:625.0px;width:295px;"><span class="tr" style="color:#000;font-size:16px;font-weight:bold;top:0px;">$67,500</span></div>
<div class="cell" style="left:921px;top:625.0px;width:109px;"><span class="tr" style="color:#0000ff;font-size:16px;font-weight:bold;top:0px;">$91,125</span></div>
<div class="cell" style="left:1030px;top:625.0px;width:19px;"></div>
<div class="rh" style="top:645.0px">18</div>
<div class="cell" style="left:45px;top:645.0px;width:400px;"><span class="tl" style="color:#0000ff;font-size:16px;top:1px;">Cost of Goods Sold</span></div>
<div class="cell" style="left:445px;top:645.0px;width:181px;"><span class="tr" style="color:#000;font-size:16px;top:1px;">($11,000)</span></div>
<div class="cell" style="left:626px;top:645.0px;width:295px;"><span class="tr" style="color:#000;font-size:16px;top:1px;">($14,850)</span></div>
<div class="cell" style="left:921px;top:645.0px;width:109px;"><span class="tr" style="color:#0000ff;font-size:16px;top:1px;">($20,048)</span></div>
<div class="cell" style="left:1030px;top:645.0px;width:19px;"></div>
<div class="rh" style="top:665.0px">19</div>
<div class="cell f" style="left:45px;top:665.0px;width:400px;background:#d9e1f2;"><span class="tl" style="color:#000;font-size:16px;font-weight:bold;top:0px;">Gross Profit</span></div>
<div class="cell" style="left:445px;top:665.0px;width:181px;"><span class="tr" style="color:#000;font-size:16px;font-weight:bold;top:0px;">$39,000</span></div>
<div class="cell" style="left:626px;top:665.0px;width:295px;"><span class="tr" style="color:#000;font-size:16px;font-weight:bold;top:0px;">$52,650</span></div>
<div class="cell f" style="left:921px;top:665.0px;width:109px;background:#d9e1f2;"><span class="tr" style="color:#000;font-size:16px;font-weight:bold;top:0px;">$71,078</span></div>
<div class="cell" style="left:1030px;top:665.0px;width:19px;"></div>
<div class="rh" style="top:685.0px">20</div>
<div class="cell" style="left:45px;top:685.0px;width:400px;"><span class="tl" style="color:#000;font-size:16px;font-weight:bold;top:0px;">EBIT (Operating Income)</span></div>
<div class="cell" style="left:445px;top:685.0px;width:181px;"><span class="tr" style="color:#000;font-size:16px;font-weight:bold;top:0px;">$89,000</span></div>
<div class="cell" style="left:626px;top:685.0px;width:295px;"><span class="tr" style="color:#000;font-size:16px;font-weight:bold;top:0px;">$120,150</span></div>
<div class="cell" style="left:921px;top:685.0px;width:109px;"><span class="tr" style="color:#000;font-size:16px;font-weight:bold;top:0px;">$162,203</span></div>
<div class="cell" style="left:1030px;top:685.0px;width:19px;"></div>
<div class="rh" style="top:705.0px">21</div>
<div class="cell f" style="left:45px;top:705.0px;width:400px;background:#1f4e78;"><span class="tl" style="color:#fff;font-size:14.67px;font-weight:bold;top:0px;">Operating Expenses</span></div>
<div class="cell" style="left:445px;top:705.0px;width:181px;"><span class="tr" style="color:#000;font-size:16px;top:1px;">($27,500)</span></div>
<div class="cell" style="left:626px;top:705.0px;width:295px;"><span class="tr" style="color:#000;font-size:16px;top:1px;">($37,125)</span></div>
<div class="cell" style="left:921px;top:705.0px;width:109px;"><span class="tr" style="color:#000;font-size:16px;top:1px;">($50,119)</span></div>
<div class="cell" style="left:1030px;top:705.0px;width:19px;"></div>
<div class="rh" style="top:725.0px">22</div>
<div class="cell f" style="left:45px;top:725.0px;width:400px;background:#e7e6e6;"><span class="tl" style="color:#000;font-size:16px;font-weight:bold;top:0px;">EBIT (Operating Income)</span></div>
<div class="cell f" style="left:445px;top:725.0px;width:181px;background:#e7e6e6;"><span class="tr" style="color:#0000ff;font-size:16px;font-weight:bold;top:0px;">$11,500</span></div>
<div class="cell f" style="left:626px;top:725.0px;width:295px;background:#e7e6e6;"><span class="tr" style="color:#0000ff;font-size:16px;font-weight:bold;top:0px;">$15,525</span></div>
<div class="cell f" style="left:921px;top:725.0px;width:109px;background:#e7e6e6;"><span class="tr" style="color:#0000ff;font-size:16px;font-weight:bold;top:0px;">$20,959</span></div>
<div class="cell f" style="left:1030px;top:725.0px;width:19px;background:#1f4e78;"></div>
<div class="rh" style="top:745.0px">23</div>
<div class="cell" style="left:45px;top:745.0px;width:400px;"><span class="tl" style="color:#000;font-size:16px;top:1px;">Interest Expense</span></div>
<div class="cell" style="left:445px;top:745.0px;width:181px;"><span class="tr" style="color:#0000ff;font-size:16px;top:1px;">($800)</span></div>
<div class="cell" style="left:626px;top:745.0px;width:295px;"><span class="tr" style="color:#0000ff;font-size:16px;top:1px;">($750)</span></div>
<div class="cell" style="left:921px;top:745.0px;width:109px;"><span class="tr" style="color:#0000ff;font-size:16px;top:1px;">($700)</span></div>
<div class="cell f" style="left:1030px;top:745.0px;width:19px;background:#e7e6e6;"></div>
<div class="rh" style="top:765.0px">24</div>
<div class="cell" style="left:45px;top:765.0px;width:400px;"><span class="tl" style="color:#000;font-size:16px;font-weight:bold;top:0px;">Interest Income</span></div>
<div class="cell" style="left:445px;top:765.0px;width:181px;"><span class="tr" style="color:#0000ff;font-size:16px;font-weight:bold;top:0px;">$150</span></div>
<div class="cell" style="left:626px;top:765.0px;width:295px;"><span class="tr" style="color:#0000ff;font-size:16px;font-weight:bold;top:0px;">$200</span></div>
<div class="cell" style="left:921px;top:765.0px;width:109px;"><span class="tr" style="color:#0000ff;font-size:16px;font-weight:bold;top:0px;">$250</span></div>
<div class="cell" style="left:1030px;top:765.0px;width:19px;"></div>
<div class="rh" style="top:785.0px">25</div>
<div class="cell" style="left:45px;top:785.0px;width:400px;"><span class="tl" style="color:#000;font-size:16px;top:1px;">Interest Expense</span></div>
<div class="cell" style="left:445px;top:785.0px;width:181px;"><span class="tr" style="color:#0000ff;font-size:16px;top:1px;">($800)</span></div>
<div class="cell" style="left:626px;top:785.0px;width:295px;"><span class="tr" style="color:#0000ff;font-size:16px;top:1px;">($750)</span></div>
<div class="cell" style="left:921px;top:785.0px;width:109px;"><span class="tr" style="color:#0000ff;font-size:16px;top:1px;">($700)</span></div>
<div class="cell" style="left:1030px;top:785.0px;width:19px;"></div>
<div class="rh" style="top:805.0px">26</div>
<div class="cell f" style="left:45px;top:805.0px;width:400px;background:#d9e1f2;"><span class="tl" style="color:#000;font-size:16px;font-weight:bold;top:0px;">Earnings Before Tax (EBT)</span></div>
<div class="cell f" style="left:445px;top:805.0px;width:181px;background:#d9e1f2;"><span class="tr" style="color:#000;font-size:16px;font-weight:bold;top:0px;">$10,850</span></div>
<div class="cell f" style="left:626px;top:805.0px;width:295px;background:#d9e1f2;"><span class="tr" style="color:#000;font-size:16px;font-weight:bold;top:0px;">$14,975</span></div>
<div class="cell f" style="left:921px;top:805.0px;width:109px;background:#d9e1f2;"><span class="tr" style="color:#000;font-size:16px;font-weight:bold;top:0px;">$20,509</span></div>
<div class="cell f" style="left:1030px;top:805.0px;width:19px;background:#d9e1f2;"></div>
<div class="rh" style="top:825.0px">27</div>
<div class="cell" style="left:45px;top:825.0px;width:400px;"><span class="tl" style="color:#000;font-size:16px;top:1px;">Income Tax Expense</span></div>
<div class="cell" style="left:445px;top:825.0px;width:181px;"><span class="tr" style="color:#000;font-size:16px;top:1px;">($2,279)</span></div>
<div class="cell" style="left:626px;top:825.0px;width:295px;"><span class="tr" style="color:#000;font-size:16px;top:1px;">($3,145)</span></div>
<div class="cell" style="left:921px;top:825.0px;width:109px;"><span class="tr" style="color:#000;font-size:16px;top:1px;">($4,307)</span></div>
<div class="cell" style="left:1030px;top:825.0px;width:19px;"></div>
<div class="rh" style="top:845.0px">28</div>
<div class="cell f" style="left:45px;top:845.0px;width:400px;background:#d9e1f2;"><span class="tl" style="color:#fff;font-size:14.67px;font-weight:bold;top:0px;">Net Income</span></div>
<div class="cell f" style="left:445px;top:845.0px;width:181px;background:#d9e1f2;"><span class="tr" style="color:#000;font-size:16px;font-weight:bold;top:0px;">$8,572</span></div>
<div class="cell f" style="left:626px;top:845.0px;width:295px;background:#d9e1f2;"><span class="tr" style="color:#000;font-size:16px;font-weight:bold;top:0px;">$11,830</span></div>
<div class="cell f" style="left:921px;top:845.0px;width:109px;background:#d9e1f2;"><span class="tr" style="color:#000;font-size:16px;font-weight:bold;top:0px;">$16,202</span></div>
<div class="cell f" style="left:1030px;top:845.0px;width:19px;background:#d9e1f2;"></div>
</div>
<div id="tabbar"></div>
<div class="abs" style="left:30.500px;top:870.500px;width:0;height:0;border-top:4px solid transparent;border-bottom:4px solid transparent;border-right:5px solid #c6c6c6"></div>
<div class="abs" style="left:59.500px;top:870.500px;width:0;height:0;border-top:4px solid transparent;border-bottom:4px solid transparent;border-left:5px solid #c6c6c6"></div>
<div class="abs" style="left:104px;top:861px;width:126px;height:24px;background:#fff;border-bottom:2px solid #1e7a43;border-left:1px solid #d6d6d6;border-right:1px solid #d6d6d6"></div>
<div class="abs" style="left:104px;top:865px;width:126px;text-align:center;font-size:13px;line-height:16px;font-weight:bold;color:#1b6b3c;white-space:nowrap">Financial Model</div>
<div class="abs" style="left:242px;top:865px;font-size:13px;line-height:16px;color:#333;white-space:nowrap;letter-spacing:.25px">Industry Stats</div>
<div class="abs" style="left:342px;top:865px;width:1px;height:19px;background:#c4c4c4"></div>
<svg class="abs" style="left:375px;top:865px" width="17" height="17" viewBox="0 0 17 17" fill="none" stroke="#555" stroke-width="1.200"><circle cx="8.500" cy="8.500" r="6.800"/><path d="M8.500 5v7M5 8.500h7"/></svg>
<div id="status"></div>
<div class="abs" style="left:15px;top:894px;font-size:11px;line-height:14px;color:#fff;font-family:'DejaVu Sans','Liberation Sans',sans-serif;letter-spacing:-.45px">Ready</div>
<div class="abs" style="left:840px;top:900px;width:10px;height:1px;background:#e8f1ec"></div>
<div class="abs" style="left:857px;top:900px;width:120px;height:1px;background:#e8f1ec"></div>
<div class="abs" style="left:915px;top:895px;width:3px;height:11px;background:#fff"></div>
<div class="abs" style="left:983px;top:900px;width:12px;height:1px;background:#e8f1ec"></div>
<div class="abs" style="left:988.500px;top:894px;width:1px;height:12px;background:#e8f1ec"></div>
<div class="abs" style="left:1007px;top:894px;font-size:11px;line-height:14px;color:#fff;font-family:'DejaVu Sans','Liberation Sans',sans-serif;letter-spacing:-.1px">100%</div>
<div class="abs" style="left:1035px;top:497px;width:24px;height:24px;border-radius:12px;background:#f6f5f3"></div>
<svg class="abs" style="left:1044px;top:504px" width="8" height="10" viewBox="0 0 8 10" fill="#55524e"><circle cx="2.500" cy="2" r=".8"/><circle cx="5.500" cy="2" r=".8"/><circle cx="2.500" cy="5" r=".8"/><circle cx="5.500" cy="5" r=".8"/><circle cx="2.500" cy="8" r=".8"/><circle cx="5.500" cy="8" r=".8"/></svg>
<div class="card" style="top:436px">
  <div class="ico"></div>
  <svg class="abs" style="left:18.600px;top:18.800px" width="18.840" height="18.840" viewBox="0 0 24 24" fill="none" stroke="#1c1b19" stroke-width="1.650" stroke-linejoin="round" stroke-linecap="round"><path d="M22 7L13.500 15.500 8.500 10.500 2 17"/><path d="M16 7H22V13"/></svg>
  <div class="ttl"><span style="letter-spacing:-0.083px">Fix EBIT Calculation Inconsistency</span></div>
  <div class="dsc"><span style="letter-spacing:-0.031px">EBIT row appears twice with conflicting values; recalculate</span><br><span style="letter-spacing:-0.098px">to ensure Gross Profit minus Operating Expenses equals</span><br><span style="letter-spacing:0.087px">Operating Income correctly.</span></div>
</div>
<div class="card" style="top:550px">
  <div class="ico"></div>
  <svg class="abs" style="left:19px;top:19px" width="18" height="18" viewBox="0 0 18 18" fill="none" stroke="#1c1b19" stroke-width="1.300" stroke-linejoin="round"><path d="M2.500 3H15.400L10.400 8.900V14.400L8 13.600V8.900z"/></svg>
  <div class="ttl"><span style="letter-spacing:-0.037px">Validate Shareholder Data Alignment</span></div>
  <div class="dsc"><span style="letter-spacing:-0.044px">Shareholder section mixed with key assumptions;</span><br><span style="letter-spacing:-0.051px">reorganize rows to separate shareholder details from</span><br><span style="letter-spacing:-0.018px">financial model assumptions for clarity.</span></div>
</div>
<div class="card" style="top:664px">
  <div class="ico"></div>
  <svg class="abs" style="left:18.400px;top:18.500px" width="18.840" height="18.840" viewBox="0 0 24 24" fill="none" stroke="#1c1b19" stroke-width="1.650" stroke-linejoin="round" stroke-linecap="round"><path d="M12 2V22"/><path d="M17 5H9.500a3.500 3.500 0 0 0 0 7h5a3.500 3.500 0 0 1 0 7H6"/></svg>
  <div class="ttl"><span style="letter-spacing:-0.035px">Reconcile Cash Flow Statement Duplications</span></div>
  <div class="dsc"><span style="letter-spacing:0.022px">Operating cash flow and investing activities appear</span><br><span style="letter-spacing:0.002px">duplicated; audit formulas to eliminate row redundancies</span><br><span style="letter-spacing:-0.019px">and ensure accurate net cash calculations.</span></div>
</div>
<div id="inbox"></div>
<div class="abs" style="left:1072px;top:798px;font-size:14px;line-height:18px;color:#787570;white-space:nowrap;letter-spacing:.03px">What do you need help with?</div>
<svg class="abs" style="left:1077px;top:858px" width="18" height="22" viewBox="0 0 18 22" fill="none" stroke="#75716d" stroke-width="1.300" stroke-linecap="round"><path d="M4.700 5.200V14.500a4.400 4.400 0 0 0 8.800 0V5.500a3 3 0 0 0 -6 0V13.500a1.600 1.600 0 0 0 3.200 0V6.500"/></svg>
<svg class="abs" style="left:1363px;top:858px" width="20" height="20" viewBox="0 0 20 20" fill="none" stroke="#55524e" stroke-width="1.200" stroke-linejoin="round"><path d="M13.500 2.800a2 2 0 0 1 2.900 2.900L6.400 15.700l-4 1.200 1.200 -4z"/></svg>
<svg class="abs" style="left:1386px;top:866px" width="10" height="7" viewBox="0 0 10 7" fill="none" stroke="#8a8783" stroke-width="1.100"><path d="M1.500 1.500L5 5l3.500 -3.500"/></svg>
<div class="abs" style="left:1411px;top:862px;font-size:12px;line-height:14px;color:#77746f;letter-spacing:-.3px">Fast</div>
<svg class="abs" style="left:1438px;top:866px" width="10" height="7" viewBox="0 0 10 7" fill="none" stroke="#8a8783" stroke-width="1.100"><path d="M1.500 1.500L5 5l3.500 -3.500"/></svg>
<div class="abs" style="left:1463px;top:853px;width:32px;height:32px;border-radius:16px;background:#c6c6cb"></div>
<svg class="abs" style="left:1471px;top:861px" width="16" height="16" viewBox="0 0 16 16" fill="none" stroke="#fff" stroke-width="1.500"><path d="M8 13.500V3M3.500 7.500L8 3l4.500 4.500"/></svg>
</div></div></div>
</div>
</body>
</html>
